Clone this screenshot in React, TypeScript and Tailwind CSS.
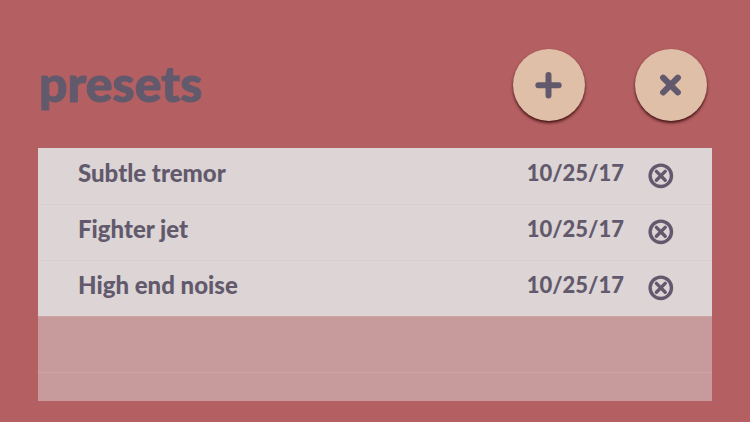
import React from "react";

const presets = [
  { name: "Subtle tremor", date: "10/25/17" },
  { name: "Fighter jet", date: "10/25/17" },
  { name: "High end noise", date: "10/25/17" },
];

function PlusIcon() {
  return (
    <svg viewBox="0 0 28 28" className="size-7" fill="none" stroke="currentColor" strokeWidth="6" strokeLinecap="round">
      <path d="M13.5 4v20.4M3.3 14.2h20.4" />
    </svg>
  );
}

function CrossIcon() {
  return (
    <svg viewBox="0 0 28 28" className="size-7" fill="none" stroke="currentColor" strokeWidth="6.2" strokeLinecap="round">
      <path d="M6.2 6.8l14.6 14.6M20.8 6.8L6.2 21.4" />
    </svg>
  );
}

function RemoveIcon() {
  return (
    <svg viewBox="0 0 26 26" className="size-[26px]" fill="none" stroke="currentColor" strokeWidth="3.4">
      <circle cx="12.8" cy="12.8" r="10.7" />
      <path d="M8.4 8.4l8.8 8.8M17.2 8.4l-8.8 8.8" strokeLinecap="round" />
    </svg>
  );
}

function RoundButton({ label, children }: { label: string; children: React.ReactNode }) {
  return (
    <button
      type="button"
      aria-label={label}
      className="size-[72px] rounded-full bg-[#e0bfa9] flex items-center justify-center shadow-[0_2px_3px_rgba(40,0,0,0.8)]"
    >
      {children}
    </button>
  );
}

export default function App() {
  return (
    <div className="h-screen flex flex-col bg-[#b45f61] px-[38px] pb-[21px] font-['Lato',sans-serif] text-[#625a6c]">
      {/* Header */}
      <header className="shrink-0 flex items-center justify-between pt-[49px] pb-[27px] pl-px pr-[5px]">
        <h1 className="font-black text-[50px] leading-12 pb-1 [-webkit-text-stroke:1px_#625a6c]">presets</h1>
        <div className="flex gap-[50px]">
          <RoundButton label="Add preset">
            <PlusIcon />
          </RoundButton>
          <RoundButton label="Close">
            <CrossIcon />
          </RoundButton>
        </div>
      </header>

      {/* Preset list */}
      <ul className="flex-1 min-h-0 overflow-hidden bg-[#c79a9b]">
        {presets.map((preset) => (
          <li
            key={preset.name}
            className="h-14 flex items-center pl-10 pr-[38px] bg-[#dcd4d5] border-t border-[#dccccd] first:border-[#dcd4d5] leading-7 font-black"
          >
            <span className="flex-1 pb-2 text-2xl leading-7">{preset.name}</span>
            <time className="pb-2 mr-6 text-[22px]">{preset.date}</time>
            <button type="button" aria-label={`Delete ${preset.name}`} className="pb-0.5">
              <RemoveIcon />
            </button>
          </li>
        ))}
        <li className="h-14 border-t border-[#cfa4a5]" />
        <li className="h-14 border-t border-[#cfa4a5]" />
      </ul>
    </div>
  );
}
